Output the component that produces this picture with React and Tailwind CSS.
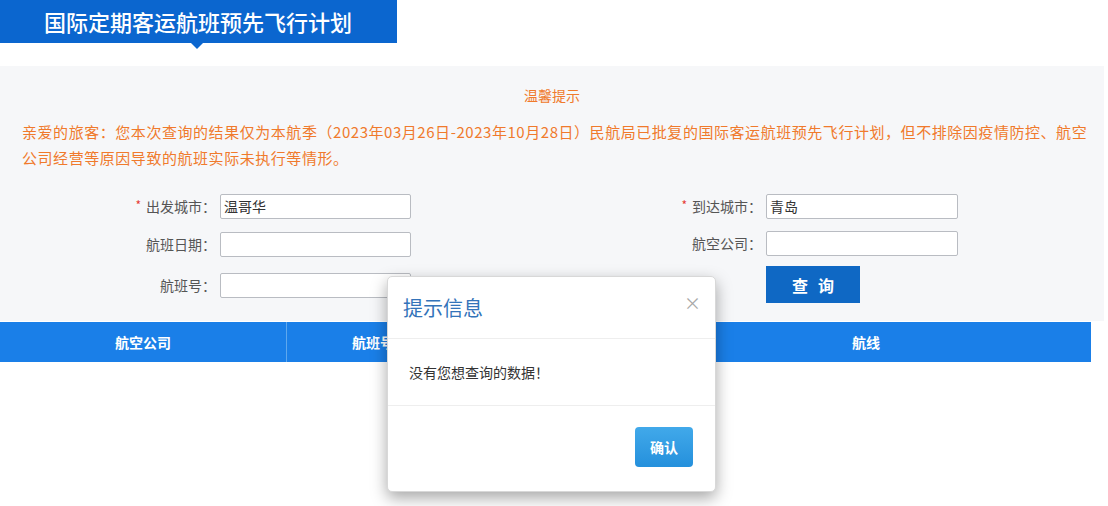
export default function App() {
  const font = { fontFamily: '"Noto Sans CJK SC", "Noto Sans", sans-serif' };

  return (
    <div className="relative w-[1108px] h-[506px] bg-white overflow-hidden" style={font}>
      {/* Title tab */}
      <div className="relative w-[397px] h-[43px] bg-[#0b66cf]">
        <div className="pl-[44px] text-[22px] leading-[43px] text-white font-medium">国际定期客运航班预先飞行计划</div>
        <div className="absolute left-[191px] -bottom-[6px] w-0 h-0 border-t-[6px] border-t-[#0b66cf] border-x-[6px] border-x-transparent" />
      </div>

      <div className="h-[23px]" />

      {/* Search panel */}
      <div className="w-[1104px] h-[255px] bg-[#f6f7f9] pt-[19px]">
        <div className="text-center text-[14px] leading-[20px] text-[#f07a2c]">温馨提示</div>
        <div className="mt-[14px] px-[22px] text-[15px] leading-[26px] tracking-[0.55px] text-[#f07a2c]">
          <div className="whitespace-nowrap">
            亲爱的旅客：您本次查询的结果仅为本航季（2023年03月26日-2023年10月28日）民航局已批复的国际客运航班预先飞行计划，但不排除因疫情防控、航空
          </div>
          <div className="whitespace-nowrap">公司经营等原因导致的航班实际未执行等情形。</div>
        </div>

        {/* Form */}
        <div className="mt-[23px] flex">
          <div className="flex flex-col">
            <FormRow label="出发城市：" required value="温哥华" labelW="w-[220px]" inputW="w-[191px]" />
            <div className="h-[13px]" />
            <FormRow label="航班日期：" labelW="w-[220px]" inputW="w-[191px]" />
            <div className="h-[16px]" />
            <FormRow label="航班号：" labelW="w-[220px]" inputW="w-[191px]" />
          </div>
          <div className="flex flex-col ml-[137px]">
            <FormRow label="到达城市：" required value="青岛" labelW="w-[218px]" inputW="w-[192px]" />
            <div className="h-[12px]" />
            <FormRow label="航空公司：" labelW="w-[218px]" inputW="w-[192px]" />
            <div className="h-[10px]" />
            <div className="flex">
              <div className="w-[218px]" />
              <button className="w-[94px] h-[37px] bg-[#0f68c4] text-white text-[16px] font-bold tracking-[10px] pl-[10px]">
                查询
              </button>
            </div>
          </div>
        </div>
      </div>

      {/* Table header */}
      <div className="mt-px flex w-[1091px] h-[40px] bg-[#1a7fe8] text-white text-[14px] font-bold">
        <div className="w-[287px] flex items-center justify-center border-r border-[#5ea8ee]">航空公司</div>
        <div className="w-[173px] flex items-center justify-center border-r border-[#5ea8ee]">航班号</div>
        <div className="w-[181px] flex items-center justify-center border-r border-[#5ea8ee]">班期</div>
        <div className="flex-1 flex items-center justify-center">航线</div>
      </div>

      {/* Modal */}
      <div className="absolute left-[387px] top-[276px] w-[329px] h-[216px] bg-white rounded-[5px] border border-[#d8d8d8] shadow-[0_6px_16px_rgba(0,0,0,0.35)] flex flex-col">
        <div className="h-[62px] flex items-center justify-between px-[15px] border-b border-[#eeeeee]">
          <span className="text-[20px] text-[#3373b9]">提示信息</span>
          <span className="text-[17px] text-[#a8a8a8] leading-none -mt-[10px] -mr-[1px]">×</span>
        </div>
        <div className="h-[67px] flex items-center px-[21px] border-b border-[#eeeeee] text-[14px] text-[#333333]">
          没有您想查询的数据！
        </div>
        <div className="flex-1 flex justify-end items-start pt-[21px] pr-[22px]">
          <button className="w-[58px] h-[40px] rounded-[4px] bg-gradient-to-b from-[#41a9ea] to-[#2490dc] text-white text-[14px] font-bold">
            确认
          </button>
        </div>
      </div>
    </div>
  );
}

function FormRow({ label, required, value, labelW, inputW }) {
  return (
    <div className="flex items-center">
      <div className={`${labelW} pr-[4px] text-right text-[14px] text-[#555555]`}>
        {required && <span className="text-[#e53935] text-[12px] mr-[5px] align-top">*</span>}
        {label}
      </div>
      <div
        className={`${inputW} h-[25px] bg-white border border-[#b9bcc2] rounded-[2px] px-[3px] text-[14px] leading-[23px] text-[#333333]`}
      >
        {value}
      </div>
    </div>
  );
}
